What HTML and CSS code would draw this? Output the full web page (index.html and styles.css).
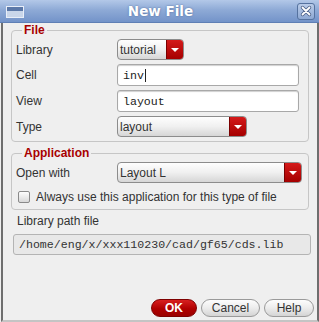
FILE: index.html
```html
<!DOCTYPE html>
<html lang="en">
<head>
  <meta charset="UTF-8" />
  <title>New File</title>
  <link rel="stylesheet" href="styles.css">
</head>
<body>
  <div class="dialog">
    <div class="titlebar">
      <span class="win-icon"><span class="win-icon-bar"></span></span>
      <span class="title">New File</span>
      <span class="close">
        <svg viewBox="0 0 12 12" aria-hidden="true">
          <path d="M2.5 2.5l7 7M9.5 2.5l-7 7" stroke="#4a5f86" stroke-width="3.4" stroke-linecap="round"/>
          <path d="M2.5 2.5l7 7M9.5 2.5l-7 7" stroke="#fff" stroke-width="1.8" stroke-linecap="round"/>
        </svg>
      </span>
    </div>

    <div class="content">
      <fieldset class="group">
        <legend>File</legend>
        <div class="row">
          <label>Library</label>
          <div class="combo combo-lib"><span class="combo-text">tutorial</span><span class="arrow"></span></div>
        </div>
        <div class="row">
          <label>Cell</label>
          <div class="field">inv<span class="caret"></span></div>
        </div>
        <div class="row">
          <label>View</label>
          <div class="field">layout</div>
        </div>
        <div class="row">
          <label>Type</label>
          <div class="combo combo-type"><span class="combo-text">layout</span><span class="arrow"></span></div>
        </div>
      </fieldset>

      <fieldset class="group group-app">
        <legend>Application</legend>
        <div class="row">
          <label>Open with</label>
          <div class="combo combo-app"><span class="combo-text">Layout L</span><span class="arrow"></span></div>
        </div>
        <div class="check-row">
          <span class="checkbox"></span>
          <span>Always use this application for this type of file</span>
        </div>
      </fieldset>

      <div class="path-label">Library path file</div>
      <div class="path-field">/home/eng/x/xxx110230/cad/gf65/cds.lib</div>

      <div class="buttons">
        <button class="btn btn-ok">OK</button>
        <button class="btn btn-cancel">Cancel</button>
        <button class="btn btn-help">Help</button>
      </div>
    </div>
  </div>
</body>
</html>
```

FILE: styles.css
```css
*, *::before, *::after {
  box-sizing: border-box;
}
body {
  margin: 0;
  font-family: 'Liberation Sans', Arial, sans-serif;
  font-size: 12px;
  color: #333;
  background: #efefef;
}

.dialog {
  width: 319px;
  height: 322px;
  display: flex;
  flex-direction: column;
}

/* title bar */
.titlebar {
  height: 23px;
  display: flex;
  align-items: center;
  padding: 0 4px 0 6px;
  background: linear-gradient(#b3c8e8, #8eaad6 45%, #7393c9);
  border-bottom: 1px solid #5f7fb5;
}
.win-icon {
  width: 18px;
  height: 12px;
  border: 1px solid #e8eef8;
  background: #c9d6ea;
  display: flex;
  flex-direction: column;
  margin-top: 2px;
}
.win-icon-bar {
  height: 4px;
  background: #5b78a8;
}
.title {
  flex: 1;
  text-align: center;
  font-family: 'DejaVu Sans', sans-serif;
  font-weight: bold;
  font-size: 13.5px;
  color: #fff;
  text-shadow: 0 0 2px #4d6a9c;
}
.close {
  width: 18px;
  height: 17px;
  border: 1px solid #55729f;
  border-radius: 3px;
  background: linear-gradient(#b9cbe8, #8ea9d4);
  display: flex;
  align-items: center;
  justify-content: center;
}
.close svg {
  width: 12px;
  height: 12px;
}

/* body */
.content {
  flex: 1;
  display: flex;
  flex-direction: column;
  padding: 0 8px 3px 8px;
  border-left: 2px solid #6e6e6e;
  border-right: 2px solid #6e6e6e;
  border-bottom: 2px solid #c4c4c4;
  margin-left: 1px;
}

.group {
  margin: 0;
  padding: 2px 4px 4px 4px;
  border: 1px solid #c6c6c6;
  border-radius: 4px;
  display: flex;
  flex-direction: column;
  gap: 4px;
}
.group legend {
  margin-left: 6px;
  padding: 0 2px;
  font-weight: bold;
  font-size: 12px;
  line-height: 14px;
  color: #a80000;
}
.group-app {
  margin-top: 4px;
  padding-bottom: 2px;
}

.row {
  display: flex;
  align-items: center;
}
.row label {
  width: 101px;
  flex: none;
}

.combo {
  height: 21px;
  display: flex;
  align-items: center;
  border: 1px solid #8c8c8c;
  border-radius: 4px;
  background: linear-gradient(#fefefe, #f0f0f0 50%, #d6d6d6);
  overflow: hidden;
}
.combo-text {
  flex: 1;
  padding-left: 2px;
}
.combo .arrow {
  width: 17px;
  height: 100%;
  background: linear-gradient(#d41a1a, #a50000);
  border-left: 1px solid #7a0000;
  display: flex;
  align-items: center;
  justify-content: center;
}
.combo .arrow::after {
  content: '';
  border-left: 4px solid transparent;
  border-right: 4px solid transparent;
  border-top: 4px solid #fff;
  margin-top: 1px;
}
.combo-lib {
  width: 67px;
}
.combo-type {
  width: 130px;
}
.combo-app {
  width: 185px;
}

.field {
  width: 182px;
  height: 22px;
  display: flex;
  align-items: center;
  padding-left: 5px;
  background: #fff;
  border: 1px solid #a8a8a8;
  border-radius: 3px;
  box-shadow: inset 0 1px 1px #d0d0d0;
  font-family: 'Liberation Mono', 'Courier New', monospace;
  font-size: 11.6px;
  color: #222;
}
.caret {
  width: 1px;
  height: 13px;
  background: #222;
  margin-left: 1px;
}

.check-row {
  display: flex;
  align-items: center;
  gap: 6px;
  padding-left: 2px;
  height: 20px;
}
.checkbox {
  width: 12px;
  height: 12px;
  border: 1px solid #8a8a8a;
  border-radius: 2px;
  background: linear-gradient(#fdfdfd, #d8d8d8);
}

.path-label {
  margin-top: 2px;
  padding-left: 6px;
  height: 18px;
  line-height: 18px;
}
.path-field {
  margin: 4px -2px 0 2px;
  height: 21px;
  display: flex;
  align-items: center;
  padding-left: 5px;
  background: #e8e8e8;
  border: 1px solid #b4b4b4;
  border-radius: 3px;
  font-family: 'Liberation Mono', 'Courier New', monospace;
  font-size: 11.6px;
  color: #333;
}

.buttons {
  margin-top: auto;
  display: flex;
  justify-content: flex-end;
  gap: 4px;
  margin-right: -5px;
}
.btn {
  height: 18px;
  padding: 0;
  border-radius: 10px;
  font-family: 'Liberation Sans', Arial, sans-serif;
  font-size: 12px;
}
.btn-ok {
  width: 46px;
  color: #fff;
  font-weight: bold;
  border: 1px solid #7e0000;
  background: linear-gradient(#d82020, #b00000 55%, #9a0000);
}
.btn-cancel,
.btn-help {
  color: #333;
  border: 1px solid #9a9a9a;
  background: linear-gradient(#fdfdfd, #ececec 50%, #d4d4d4);
}
.btn-cancel {
  width: 59px;
}
.btn-help {
  width: 50px;
}
```
